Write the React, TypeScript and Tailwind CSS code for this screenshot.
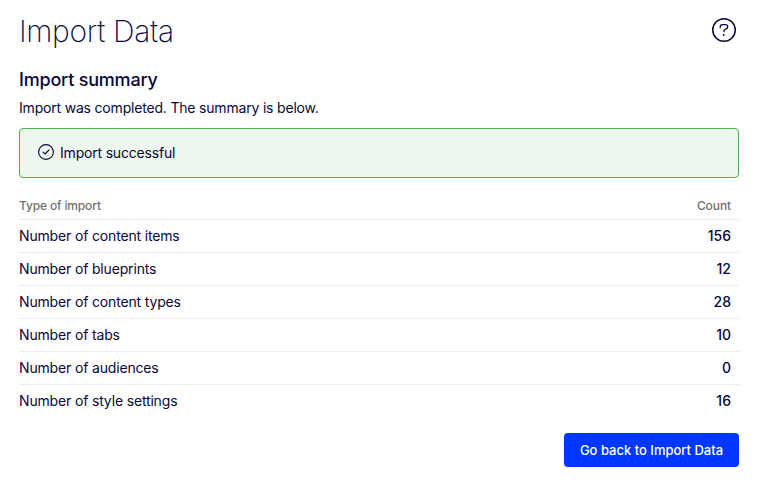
const rows: [string, number][] = [
  ["Number of content items", 156],
  ["Number of blueprints", 12],
  ["Number of content types", 28],
  ["Number of tabs", 10],
  ["Number of audiences", 0],
  ["Number of style settings", 16],
];

export default function App() {
  return (
    <main className="h-[499px] w-[775px] bg-white pl-[19px] pr-[36px] pt-[12px] font-['Inter',sans-serif] text-[14px] leading-[20px] text-[#080736]">
      <header className="flex h-[40px] items-center justify-between">
        <h1 className="mb-[2px] text-[30px] font-extralight leading-[40px] tracking-[-0.33px]">Import Data</h1>
        <svg className="mb-[4px] mr-[2px]" width="26" height="26" viewBox="0 0 26 26" fill="none" stroke="currentColor" strokeWidth="1.5" strokeLinecap="round" strokeLinejoin="round">
          <circle cx="13" cy="13" r="11.25" />
          <path d="M9.2 10.5V9.9c0-1.3.9-2.2 2.2-2.2h3.1c1.3 0 2.2.9 2.2 2.1s-.8 2-2 2.3c-1.1.3-1.7.8-1.7 1.8v.6" strokeWidth="1.3" />
          <circle cx="12.7" cy="18" r=".9" fill="currentColor" stroke="none" />
        </svg>
      </header>
      <h2 className="mt-[16px] text-[18px] font-medium leading-[24px] tracking-[-0.2px]">Import summary</h2>
      <p className="mt-[6px] tracking-[-0.19px]">Import was completed. The summary is below.</p>
      <div className="mt-[10px] flex h-[50px] items-center rounded-[4px] border border-[#4caf50] bg-[#edf7ed] pl-[18px] tracking-[-0.19px]">
        <svg className="mb-[2px] mr-[6px]" width="16" height="16" viewBox="0 0 16 16" fill="none" stroke="currentColor" strokeWidth="1.1" strokeLinecap="round" strokeLinejoin="round">
          <circle cx="8" cy="8" r="7.4" />
          <path d="m5 8.2 2 1.8 4-4" />
        </svg>
        Import successful
      </div>
      <table className="mt-[14px] w-full">
        <thead>
          <tr className="h-[27px] border-b border-[#ececee] text-[12px] leading-[16px] text-[#707070]">
            <th className="p-0 pt-[2px] text-left font-medium tracking-[-0.15px]">Type of import</th>
            <th className="p-0 pr-[8px] pt-[2px] text-right font-medium tracking-[-0.1px]">Count</th>
          </tr>
        </thead>
        <tbody>
          {rows.map(([label, count]) => (
            <tr key={label} className="h-[33px] border-b border-[#ececee] last:border-b-0">
              <td className="p-0 tracking-[-0.16px]">{label}</td>
              <td className="p-0 pr-[8px] text-right font-medium">{count}</td>
            </tr>
          ))}
        </tbody>
      </table>
      <div className="mt-[16px] flex justify-end">
        <button className="h-[34px] w-[175px] rounded-[4px] bg-[#0037ff] text-[13px] font-medium text-white">Go back to Import Data</button>
      </div>
    </main>
  );
}
